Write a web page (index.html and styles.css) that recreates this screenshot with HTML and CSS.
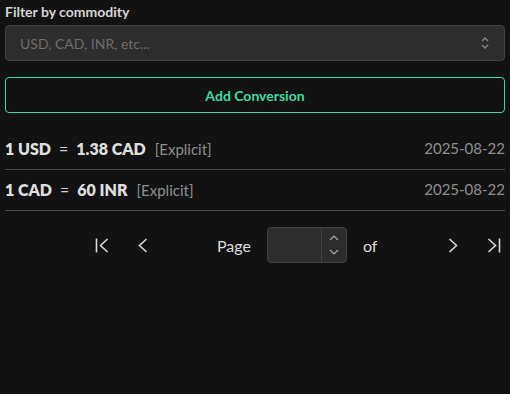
FILE: index.html
```html
<!DOCTYPE html>
<html lang="en">
<head>
    <meta charset="UTF-8">
    <meta name="viewport" content="width=device-width, initial-scale=1.0">
    <title>Conversions</title>
    <link rel="stylesheet" href="styles.css">
</head>
<body>
    <main>
        <label class="filter">
            <span>Filter by commodity</span>
            <div class="select">
                <span class="placeholder">USD, CAD, INR, etc...</span>
                <svg width="10" height="14" viewBox="0 0 10 14"><path d="M2 5l3-3 3 3M2 9l3 3 3-3" fill="none" stroke="#8a8a8a" stroke-width="1.3"/></svg>
            </div>
        </label>

        <button class="add">Add Conversion</button>

        <ul class="rates">
            <li>
                <p><b>1 USD</b><i>=</i><b>1.38 CAD</b><small>[Explicit]</small></p>
                <time>2025-08-22</time>
            </li>
            <li>
                <p><b>1 CAD</b><i>=</i><b>60 INR</b><small>[Explicit]</small></p>
                <time>2025-08-22</time>
            </li>
        </ul>

        <nav class="pager">
            <button class="nav"><svg width="14" height="15" viewBox="0 0 14 15"><path d="M1.5 0.5v14M12.5 1L5.5 7.5l7 6.5" fill="none" stroke="#d8d8d8" stroke-width="1.6"/></svg></button>
            <button class="nav"><svg width="10" height="15" viewBox="0 0 10 15"><path d="M8.5 1L1.5 7.5l7 6.5" fill="none" stroke="#d8d8d8" stroke-width="1.6"/></svg></button>
            <span class="page">Page</span>
            <div class="num">
                <span class="field"></span>
                <span class="spin">
                    <svg width="10" height="6" viewBox="0 0 10 6"><path d="M1 5l4-4 4 4" fill="none" stroke="#aaa" stroke-width="1.2"/></svg>
                    <svg width="10" height="6" viewBox="0 0 10 6"><path d="M1 1l4 4 4-4" fill="none" stroke="#aaa" stroke-width="1.2"/></svg>
                </span>
            </div>
            <span class="of">of</span>
            <button class="nav"><svg width="10" height="15" viewBox="0 0 10 15"><path d="M1.5 1l7 6.5-7 6.5" fill="none" stroke="#d8d8d8" stroke-width="1.6"/></svg></button>
            <button class="nav"><svg width="14" height="15" viewBox="0 0 14 15"><path d="M12.5 0.5v14M1.5 1l7 6.5-7 6.5" fill="none" stroke="#d8d8d8" stroke-width="1.6"/></svg></button>
        </nav>
    </main>
</body>
</html>
```

FILE: styles.css
```css
body{
    margin:0;
    background:#121212;
    color:#ddd;
    font-family: Lato, 'Noto Sans', sans-serif;
}

main{
    padding:3px 5px;
}

.filter{
    display:flex;
    flex-direction:column;
    gap:5px;

    > span{
        font-size:14px;
        font-weight:700;
        color:#d6d6d6;
    }
}

.select{
    display:flex;
    align-items:center;
    justify-content:space-between;
    height:34px;
    padding:0 14px;
    background:#2d2d2d;
    border:1px solid #424242;
    border-radius:4px;

    .placeholder{
        font-size:14px;
        color:#6e6e6e;
    }
}

.add{
    display:block;
    width:100%;
    height:36px;
    margin-top:16px;
    background:transparent;
    border:1px solid #3ddc9b;
    border-radius:4px;
    color:#42dba1;
    font-family:inherit;
    font-size:14px;
    font-weight:700;
}

.rates{
    list-style:none;
    margin:16px 0 0;
    padding:0;

    li{
        display:flex;
        justify-content:space-between;
        align-items:center;
        height:38px;
        padding-bottom:2px;
        border-bottom:1px solid #4a4a4a;
    }

    p{
        margin:0;
        display:flex;
        align-items:baseline;
        font-size:16px;
    }

    b{
        font-size:16px;
        font-weight:800;
        color:#dedede;
    }

    i{
        font-style:normal;
        margin:0 8px;
        color:#cfcfcf;
    }

    small{
        font-size:15px;
        color:#8f8f8f;
        margin-left:9px;
    }

    time{
        font-size:15px;
        color:#8f8f8f;
    }
}

.pager{
    display:flex;
    align-items:center;
    margin:16px 0 0 81px;
    color:#dcdcdc;
    font-size:16px;

    > *{
        flex-shrink:0;
    }

    .nav{
        width:32px;
        height:32px;
        display:flex;
        align-items:center;
        justify-content:center;
        background:none;
        border:0;
        padding:0;
        margin-right:9px;
    }

    .nav:last-child{
        margin-right:0;
    }

    .page{
        margin-left:49px;
        margin-right:16px;
    }

    .of{
        margin-left:16px;
        margin-right:60px;
    }
}

.num{
    display:flex;
    width:78px;
    height:34px;
    background:#2d2d2d;
    border:1px solid #424242;
    border-radius:4px;

    .field{
        flex:1;
    }

    .spin{
        width:24px;
        border-left:1px solid #424242;
        display:flex;
        flex-direction:column;
        align-items:center;
        justify-content:space-around;
        padding:3px 0;
    }
}
```
